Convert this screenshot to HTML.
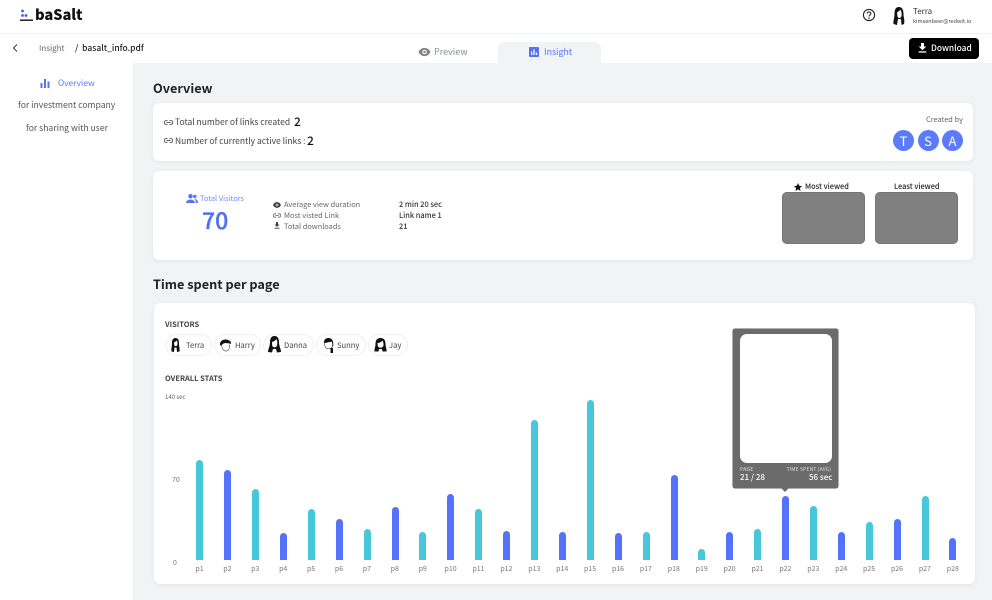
<!DOCTYPE html>
<html><head><meta charset="utf-8"><style>
html,body{margin:0;padding:0;background:#fff}
#p{position:relative;width:992px;height:600px;overflow:hidden;background:#fff;font-family:"Noto Sans CJK KR","Liberation Sans",sans-serif;color:#333}
#p div,#p svg{position:absolute}
.t{white-space:nowrap;line-height:12px;height:12px}
.card{background:#fff;border-radius:6px;box-shadow:0 1px 4px rgba(60,70,90,.08)}
.bar{width:7px;border-radius:3.5px 3.5px 0 0;bottom:40px}
.o{background:#47c7da}.e{background:#5572fa}
.l{width:28px;text-align:center;top:563px;font-size:7px;color:#777;line-height:12px}
.chip{top:334px;height:20px;border:1px solid #f0f0f2;border-radius:11px;background:#fff}
.ct{top:340px;font-size:7.6px;color:#444;line-height:12px;white-space:nowrap}
.av{width:21px;height:21px;border-radius:50%;background:#5b7bf9;color:#fff;top:130px;text-align:center;font-size:13px;line-height:21px}
.thumb{background:#808080;border-radius:5px;top:192px;height:52px;width:83px;box-shadow:inset 0 0 0 1px #757575}
</style></head><body><div id="p">

<div style="left:134px;top:63px;width:858px;height:537px;background:#f1f3f5"></div>
<div style="left:0;top:33px;width:992px;height:1px;background:#f1f2f4"></div>
<div style="left:133px;top:63px;width:1px;height:537px;background:#eceef0"></div>

<svg style="left:20px;top:9px" width="14" height="13" viewBox="0 0 14 13"><circle cx="2.500" cy="2" r="1.400" fill="#3f5cf0"/><circle cx="2.500" cy="6.500" r="1.400" fill="#3f5cf0"/><circle cx="6" cy="6.500" r="1.400" fill="#3f5cf0"/><rect x="0" y="10.500" width="13" height="1.400" fill="#111"/></svg>
<div class="t" style="left:35px;top:9px;font-size:14.700px;font-weight:900;color:#111;letter-spacing:-.1px">baSalt</div>

<svg style="left:862px;top:8px" width="14" height="14" viewBox="0 0 14 14"><circle cx="7" cy="7" r="5.600" fill="none" stroke="#222" stroke-width="1.100"/><path d="M5.200 5.600C5.200 3.400 8.900 3.500 8.900 5.600 8.900 7 7 7 7 8.500" fill="none" stroke="#222" stroke-width="1.100"/><circle cx="7" cy="10.200" r=".7" fill="#222"/></svg>
<svg style="left:893px;top:7px" width="12" height="18" viewBox="0 0 12 18"><path d="M6 0C2.500 0 1.500 3 1.500 7 1.500 11 0 14 .5 17L4 18 5 12 8 12 8.500 18 11 17C12 13 10.500 11 10.500 7 10.500 3 9 0 6 0Z" fill="#111"/><path d="M4 5.500C5.500 4.500 7 3.500 7.500 2.500 8.500 5 9 7 8.500 9 8 11.500 5 11.500 4.500 9.500Z" fill="#fff"/></svg>
<div class="t" style="left:913px;top:6px;font-size:8px;color:#333">Terra</div>
<div class="t" style="left:913px;top:15px;font-size:5.500px;color:#444">kimsenbeer@redwit.io</div>

<svg style="left:11px;top:43px" width="9" height="10" viewBox="0 0 9 10"><path d="M6 1.500 2.500 5 6 8.500" fill="none" stroke="#444" stroke-width="1.100"/></svg>
<div class="t" style="left:39px;top:43px;font-size:8px;color:#666">Insight</div>
<div class="t" style="left:75px;top:42px;font-size:8.500px;color:#222;font-weight:500">/&nbsp; basalt_info.pdf</div>

<div style="left:498px;top:42px;width:103px;height:21px;background:#f1f3f5;border-radius:6px 6px 0 0"></div>
<svg style="left:418px;top:47px" width="13" height="10" viewBox="0 0 13 10"><path d="M.5 5C3.500-.5 9.500-.5 12.500 5 9.500 10.500 3.500 10.500.5 5Z" fill="#7b8087"/><circle cx="6.500" cy="5" r="2.300" fill="#fff"/><circle cx="6.500" cy="5" r="1.200" fill="#7b8087"/></svg>
<div class="t" style="left:434px;top:46px;font-size:9px;color:#8a8f96">Preview</div>
<svg style="left:529px;top:47px" width="10" height="10" viewBox="0 0 10 10"><rect width="10" height="10" rx="1" fill="#5572fa"/><rect x="2" y="4.500" width="1.300" height="3.500" fill="#fff"/><rect x="4.400" y="2.500" width="1.300" height="5.500" fill="#fff"/><rect x="6.800" y="5.500" width="1.300" height="2.500" fill="#fff"/></svg>
<div class="t" style="left:544px;top:46px;font-size:8.800px;color:#5572fa">Insight</div>

<div style="left:909px;top:38px;width:70px;height:21px;background:#000;border-radius:4px"></div>
<svg style="left:918px;top:43px" width="9" height="10" viewBox="0 0 9 10"><path d="M3 0H6V3.500H8.300L4.500 7.300.7 3.500H3Z" fill="#fff"/><rect x=".7" y="8.300" width="7.600" height="1.300" fill="#fff"/></svg>
<div class="t" style="left:931px;top:42px;font-size:8.400px;color:#fff;font-weight:500">Download</div>

<svg style="left:40px;top:78px" width="10" height="10" viewBox="0 0 10 10"><rect x=".5" y="5" width="2" height="5" fill="#5572fa"/><rect x="4" y="1" width="2" height="9" fill="#5572fa"/><rect x="7.500" y="3.500" width="2" height="6.500" fill="#5572fa"/></svg>
<div class="t" style="left:58px;top:77px;font-size:8.400px;color:#5b78f8">Overview</div>
<div class="t" style="left:18px;top:99px;font-size:8.600px;color:#555">for investment company</div>
<div class="t" style="left:26px;top:122px;font-size:8.600px;color:#555">for sharing with user</div>

<div class="t" style="left:153px;top:82px;font-size:12.700px;font-weight:700;color:#222">Overview</div>

<div class="card" style="left:153px;top:103px;width:820px;height:58px"></div>
<svg style="left:164px;top:120px" width="9" height="5" viewBox="0 0 9 5"><path d="M3.500.6H2.300C-.300.6-.300 4.400 2.300 4.400H3.500M5.500.6H6.700C9.300.6 9.300 4.400 6.700 4.400H5.500M2.500 2.500H6.500" fill="none" stroke="#555" stroke-width=".9"/></svg>
<div class="t" style="left:175px;top:116px;font-size:8.500px;color:#444">Total number of links created</div>
<div class="t" style="left:294px;top:116px;font-size:12px;color:#111;font-weight:500">2</div>
<svg style="left:164px;top:138px" width="9" height="5" viewBox="0 0 9 5"><path d="M3.500.6H2.300C-.300.6-.300 4.400 2.300 4.400H3.500M5.500.6H6.700C9.300.6 9.300 4.400 6.700 4.400H5.500M2.500 2.500H6.500" fill="none" stroke="#555" stroke-width=".9"/></svg>
<div class="t" style="left:175px;top:135px;font-size:8.500px;color:#444">Number of currently active links :</div>
<div class="t" style="left:307px;top:135px;font-size:12px;color:#111;font-weight:500">2</div>
<div class="t" style="left:926px;top:114px;font-size:7.400px;color:#666">Created by</div>
<div class="av" style="left:893px">T</div>
<div class="av" style="left:917.500px">S</div>
<div class="av" style="left:942px">A</div>

<div class="card" style="left:153px;top:171px;width:820px;height:89px"></div>
<svg style="left:186px;top:194px" width="12" height="9" viewBox="0 0 12 9"><circle cx="4.500" cy="2.200" r="2.200" fill="#5572fa"/><path d="M0 9C0 4.500 9 4.500 9 9Z" fill="#5572fa"/><circle cx="8.800" cy="2.400" r="1.700" fill="#5572fa"/><path d="M8 5C10 4.800 12 6 12 9H10C10 7 9.500 6 8 5Z" fill="#5572fa"/></svg>
<div class="t" style="left:200px;top:193px;font-size:7.400px;color:#6f8bf9">Total Visitors</div>
<div class="t" style="left:202px;top:207px;height:24px;line-height:24px;font-size:23px;color:#4f70f5;font-weight:500;-webkit-text-stroke:.3px #4f70f5">70</div>
<svg style="left:273px;top:202px" width="8" height="6" viewBox="0 0 8 6"><path d="M0 3C2-.8 6-.8 8 3 6 6.800 2 6.800 0 3Z" fill="#333"/><circle cx="4" cy="3" r="1.400" fill="#fff"/><circle cx="4" cy="3" r=".7" fill="#333"/></svg>
<div class="t" style="left:284px;top:199px;font-size:7.400px;color:#666">Average view duration</div>
<svg style="left:273px;top:213px" width="8" height="5" viewBox="0 0 9 5"><path d="M3.500.6H2.300C-.300.6-.300 4.400 2.300 4.400H3.500M5.500.6H6.700C9.300.6 9.300 4.400 6.700 4.400H5.500M2.500 2.500H6.500" fill="none" stroke="#666" stroke-width=".9"/></svg>
<div class="t" style="left:284px;top:210px;font-size:7.400px;color:#666">Most visted Link</div>
<svg style="left:274px;top:222px" width="6" height="7" viewBox="0 0 6 7"><path d="M2 0H4V2.500H5.500L3 5 .5 2.500H2Z" fill="#444"/><rect x=".5" y="5.800" width="5" height=".9" fill="#444"/></svg>
<div class="t" style="left:284px;top:221px;font-size:7.400px;color:#666">Total downloads</div>
<div class="t" style="left:399px;top:199px;font-size:7.400px;color:#333;font-weight:500">2 min 20 sec</div>
<div class="t" style="left:399px;top:210px;font-size:7.400px;color:#333;font-weight:500">Link name 1</div>
<div class="t" style="left:399px;top:221px;font-size:7.400px;color:#333;font-weight:500">21</div>
<svg style="left:794px;top:183px" width="8" height="8" viewBox="0 0 8 8"><path d="M4 0 5.200 2.800 8 3.100 5.900 5 6.500 8 4 6.400 1.500 8 2.100 5 0 3.100 2.800 2.800Z" fill="#111"/></svg>
<div class="t" style="left:805px;top:181px;font-size:7.400px;color:#222;font-weight:500">Most viewed</div>
<div class="t" style="left:894px;top:181px;font-size:7.400px;color:#222;font-weight:500">Least viewed</div>
<div class="thumb" style="left:782px"></div>
<div class="thumb" style="left:875px"></div>

<div class="t" style="left:153px;top:278px;font-size:12.700px;font-weight:700;color:#222">Time spent per page</div>

<div class="card" style="left:154px;top:303px;width:821px;height:281px"></div>
<div class="t" style="left:165px;top:319px;font-size:7.500px;font-weight:700;color:#444">VISITORS</div>

<div class="chip" style="left:165px;width:45px"></div>
<div class="chip" style="left:214px;width:45px"></div>
<div class="chip" style="left:263px;width:49px"></div>
<div class="chip" style="left:316px;width:48px"></div>
<div class="chip" style="left:368px;width:38px"></div>
<svg style="left:171px;top:338px" width="9" height="14" viewBox="0 0 9 14"><path d="M4.500 0C1.500 0 1 2.500 1 5.500 1 8.500 0 11 .5 13.500L3 14 3.500 9.500H5.500L6 14 8.500 13.500C9 11 8 8.500 8 5.500 8 2.500 7.500 0 4.500 0Z" fill="#111"/><path d="M3 4.500 6 2.500C6.500 4.500 6.700 6 6.300 7 5.800 8.500 3.500 8.500 3.200 7Z" fill="#fff"/></svg>
<svg style="left:219px;top:339px" width="13" height="13" viewBox="0 0 13 13"><path d="M1 6C.5 2.500 3.500.2 7 .5 10 .7 12.500 2.500 12 5 10.500 4 8 4.500 6 4 4.500 4.500 3 5 2.500 7Z" fill="#111"/><path d="M2.700 7C3 10 5 12.500 7.500 12 10 11.500 10.800 8.500 10.500 5.500" fill="none" stroke="#333" stroke-width=".6"/></svg>
<svg style="left:268px;top:336px" width="13" height="17" viewBox="0 0 13 17"><path d="M6.500 0C3 0 2 3 2 6.500 2 10 0 13 0 16L4 16.500 5 13H8L9 16.500 13 16C13 13 11 10 11 6.500 11 3 10 0 6.500 0Z" fill="#111"/><path d="M4 6C6 5.500 7.500 4.500 8.500 3 9.500 5.500 9.500 8 9 9.500 8.300 12 4.800 12 4.200 9.500Z" fill="#fff"/></svg>
<svg style="left:323px;top:338px" width="11" height="15" viewBox="0 0 11 15"><path d="M5.500 0C2 0 .5 2.500 1 5.500 2.500 4.500 6 4.500 8.500 3.500 9.500 5 9.500 7 9.200 8.500L10 9C11 5 10 0 5.500 0Z" fill="#111"/><path d="M1.300 5.500C1.500 9 3.500 11 5.500 10.800 7.500 10.600 8.800 9.500 9.200 8.500" fill="none" stroke="#444" stroke-width=".6"/><rect x="7.500" y="10" width="2.500" height="5" fill="#111"/></svg>
<svg style="left:374px;top:338px" width="13" height="14" viewBox="0 0 13 14"><path d="M6.500 0C2.500 0 1.500 3 1.500 6 1.500 9 0 11.500.5 13.500L4.500 13.500 5 11H8L8.500 13.500 12.500 13.500C13 11.500 11.500 9 11.500 6 11.500 3 10.500 0 6.500 0Z" fill="#111"/><path d="M3.500 5C5.500 5 7.500 4 8.500 2.500 9.500 4.500 9.800 6.500 9.300 8 8.500 10.300 4.500 10.300 3.800 8Z" fill="#fff"/></svg>
<div class="ct" style="left:186px">Terra</div>
<div class="ct" style="left:235px">Harry</div>
<div class="ct" style="left:284px">Danna</div>
<div class="ct" style="left:337px">Sunny</div>
<div class="ct" style="left:389px">Jay</div>

<div class="t" style="left:165px;top:373px;font-size:7.500px;font-weight:700;color:#444">OVERALL STATS</div>
<div class="t" style="left:165px;top:391px;font-size:6px;color:#666">140 sec</div>
<div class="t" style="left:172px;top:474px;font-size:7px;color:#777">70</div>
<div class="t" style="left:173px;top:557px;font-size:7px;color:#777">0</div>

<div class="bar o" style="left:196px;top:459.500px"></div>
<div class="bar e" style="left:224px;top:470px"></div>
<div class="bar o" style="left:252px;top:488.500px"></div>
<div class="bar e" style="left:280px;top:533px"></div>
<div class="bar o" style="left:308px;top:508.500px"></div>
<div class="bar e" style="left:335.500px;top:519px"></div>
<div class="bar o" style="left:363.500px;top:529px"></div>
<div class="bar e" style="left:391.500px;top:506.500px"></div>
<div class="bar o" style="left:419px;top:532px"></div>
<div class="bar e" style="left:447px;top:494px"></div>
<div class="bar o" style="left:475px;top:508.500px"></div>
<div class="bar e" style="left:503px;top:530.500px"></div>
<div class="bar o" style="left:531px;top:419.500px"></div>
<div class="bar e" style="left:558.500px;top:532px"></div>
<div class="bar o" style="left:586.500px;top:400px"></div>
<div class="bar e" style="left:614.500px;top:533px"></div>
<div class="bar o" style="left:642.500px;top:532px"></div>
<div class="bar e" style="left:670.500px;top:474.500px"></div>
<div class="bar o" style="left:698px;top:549px"></div>
<div class="bar e" style="left:726px;top:532px"></div>
<div class="bar o" style="left:754px;top:529px"></div>
<div class="bar e" style="left:782px;top:496px"></div>
<div class="bar o" style="left:810px;top:505.500px"></div>
<div class="bar e" style="left:837.500px;top:532px"></div>
<div class="bar o" style="left:865.500px;top:521.500px"></div>
<div class="bar e" style="left:893.500px;top:519px"></div>
<div class="bar o" style="left:921.500px;top:496px"></div>
<div class="bar e" style="left:949px;top:537.500px"></div>

<div class="l" style="left:185.500px">p1</div>
<div class="l" style="left:213.400px">p2</div>
<div class="l" style="left:241.300px">p3</div>
<div class="l" style="left:269.200px">p4</div>
<div class="l" style="left:297.100px">p5</div>
<div class="l" style="left:325px">p6</div>
<div class="l" style="left:352.900px">p7</div>
<div class="l" style="left:380.800px">p8</div>
<div class="l" style="left:408.700px">p9</div>
<div class="l" style="left:436.600px">p10</div>
<div class="l" style="left:464.500px">p11</div>
<div class="l" style="left:492.400px">p12</div>
<div class="l" style="left:520.300px">p13</div>
<div class="l" style="left:548.200px">p14</div>
<div class="l" style="left:576.100px">p15</div>
<div class="l" style="left:604px">p16</div>
<div class="l" style="left:631.900px">p17</div>
<div class="l" style="left:659.800px">p18</div>
<div class="l" style="left:687.700px">p19</div>
<div class="l" style="left:715.600px">p20</div>
<div class="l" style="left:743.500px">p21</div>
<div class="l" style="left:771.400px">p22</div>
<div class="l" style="left:799.300px">p23</div>
<div class="l" style="left:827.200px">p24</div>
<div class="l" style="left:855.100px">p25</div>
<div class="l" style="left:883px">p26</div>
<div class="l" style="left:910.900px">p27</div>
<div class="l" style="left:938.800px">p28</div>

<div style="left:733px;top:329px;width:105px;height:159px;background:#6b6b6b;border-radius:2px;box-shadow:0 0 0 .5px #5c5c5c"></div>
<svg style="left:781px;top:488px" width="8" height="4" viewBox="0 0 8 4"><path d="M0 0H8L4 4Z" fill="#6b6b6b"/></svg>
<div style="left:739.500px;top:333.500px;width:92px;height:129px;background:#fff;border-radius:7px"></div>
<div class="t" style="left:740px;top:463px;font-size:5.500px;color:#ddd">PAGE</div>
<div class="t" style="left:786.500px;top:463px;font-size:5.300px;color:#ddd">TIME SPENT (AVG)</div>
<div class="t" style="left:740px;top:472px;font-size:8px;color:#fff;font-weight:500">21 / 28</div>
<div class="t" style="left:809px;top:472px;font-size:8px;color:#fff;font-weight:500">56 sec</div>

</div></body></html>
